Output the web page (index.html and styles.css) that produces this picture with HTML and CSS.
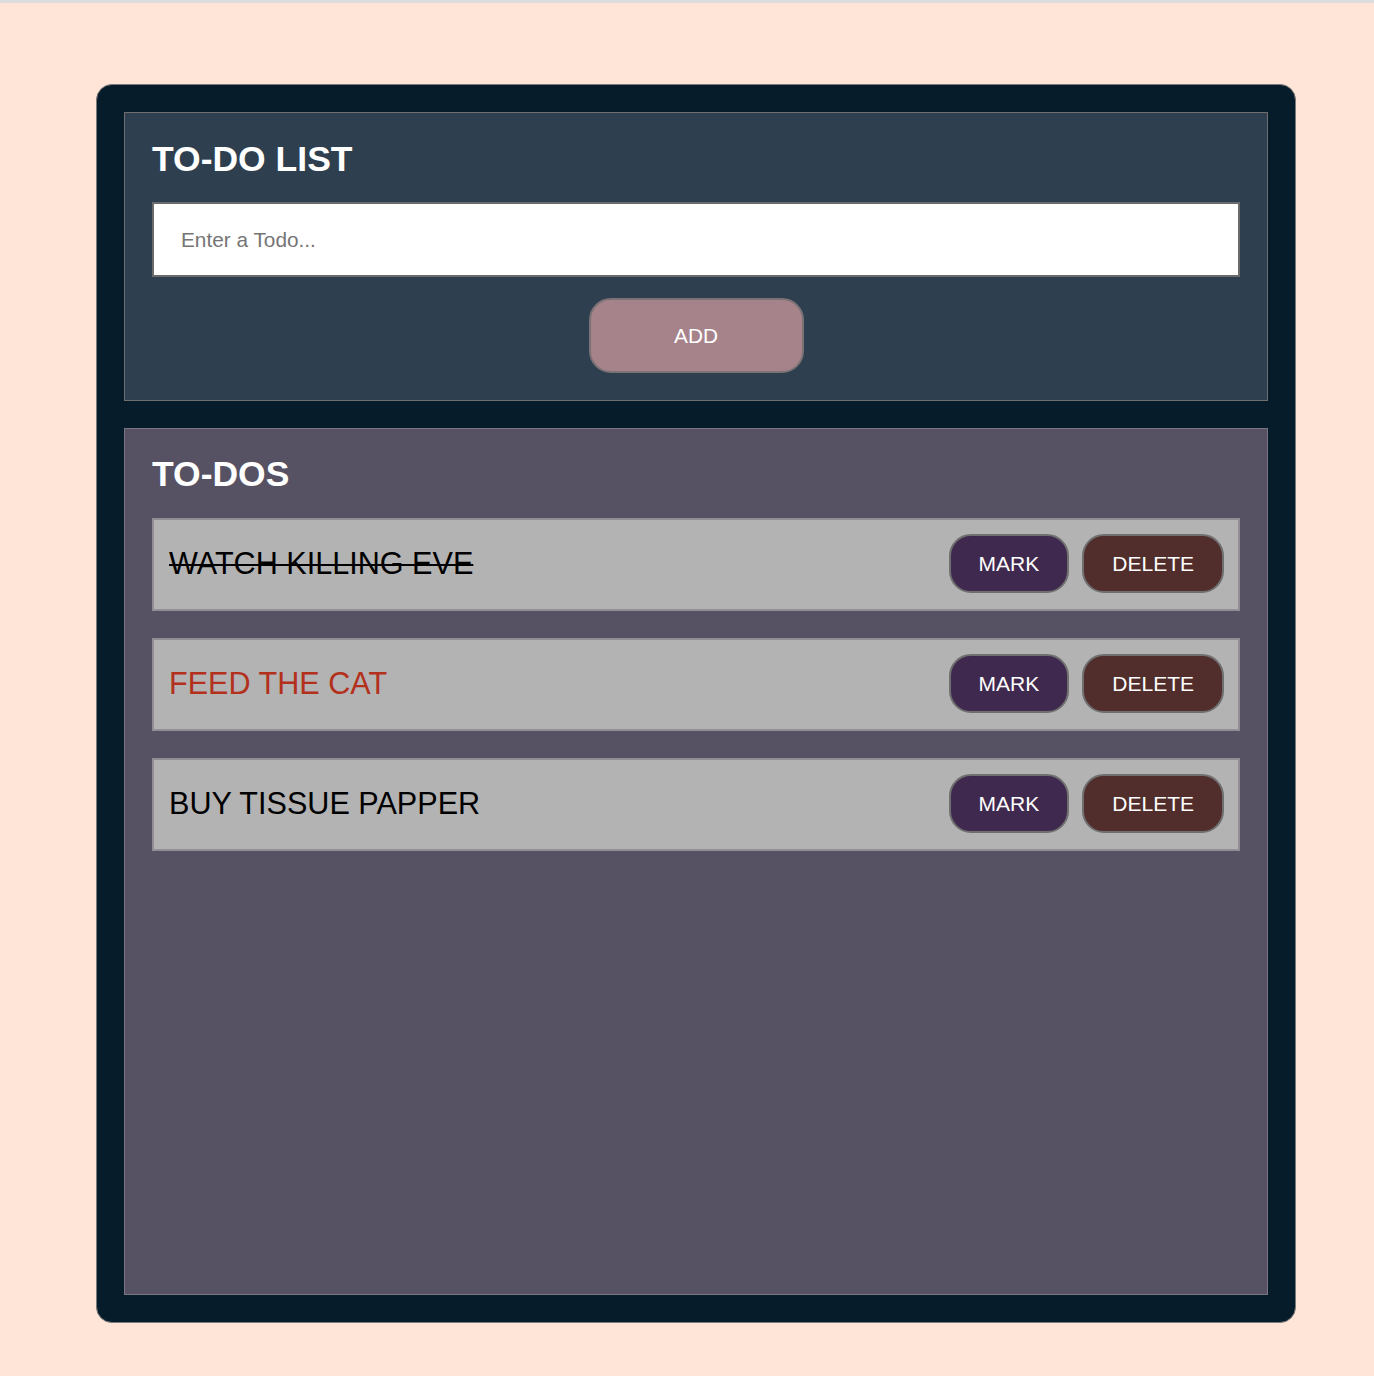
FILE: index.html
```html
<!DOCTYPE html>
<html lang="en">
<head>
<meta charset="utf-8">
<title>To-Do List</title>
<link rel="stylesheet" href="styles.css">
</head>
<body>
<main class="app">
  <section class="panel panel-add">
    <h1 class="title">TO-DO LIST</h1>
    <input class="todo-input" type="text" placeholder="Enter a Todo...">
    <button class="btn btn-add">ADD</button>
  </section>
  <section class="panel panel-list">
    <h2 class="title">TO-DOS</h2>
    <ul class="todos">
      <li class="todo">
        <span class="todo-text done">WATCH KILLING EVE</span>
        <div class="actions">
          <button class="btn btn-mark">MARK</button>
          <button class="btn btn-delete">DELETE</button>
        </div>
      </li>
      <li class="todo">
        <span class="todo-text urgent">FEED THE CAT</span>
        <div class="actions">
          <button class="btn btn-mark">MARK</button>
          <button class="btn btn-delete">DELETE</button>
        </div>
      </li>
      <li class="todo">
        <span class="todo-text">BUY TISSUE PAPPER</span>
        <div class="actions">
          <button class="btn btn-mark">MARK</button>
          <button class="btn btn-delete">DELETE</button>
        </div>
      </li>
    </ul>
  </section>
</main>
</body>
</html>
```
FILE: styles.css
```css
* {
  box-sizing: border-box;
}

html, body {
  margin: 0;
  padding: 0;
}

body {
  background: #ffe5d7;
  border-top: 3px solid #dcdcdf;
  font-family: "Liberation Sans", Arial, Helvetica, sans-serif;
  min-height: 1376px;
}

.app {
  width: 1200px;
  height: 1239px;
  margin: 81px 0 0 96px;
  background: #071c2a;
  border: 1px solid #7a7a7a;
  border-radius: 16px;
  padding: 27px;
  display: flex;
  flex-direction: column;
  gap: 27px;
}

.panel {
  border: 1px solid #6f6f6f;
  padding: 26px 27px 27px 27px;
  display: flex;
  flex-direction: column;
}

.panel-add {
  background: #2e3f4f;
  height: 289px;
}

.panel-list {
  background: #565264;
  flex: 1;
  border-color: #7a7580;
  padding-top: 25px;
}

.title {
  margin: 0;
  font-size: 35.5px;
  line-height: 41px;
  font-weight: 700;
  color: #ffffff;
}

.panel-add .title {
  margin-bottom: 22px;
}

.panel-list .title {
  margin-bottom: 23px;
}

.todo-input {
  height: 75px;
  width: 100%;
  border: 2px solid #6b6b6b;
  background: #ffffff;
  padding: 0 27px;
  font-family: inherit;
  font-size: 20.8px;
  color: #333;
  outline: none;
}

.todo-input::placeholder {
  color: #757575;
}

.btn {
  font-family: inherit;
  color: #ffffff;
  border: 2px solid #6f6f6f;
  border-radius: 22px;
  cursor: pointer;
}

.btn-add {
  align-self: center;
  margin-top: 21px;
  width: 215px;
  height: 75px;
  background: #a6838a;
  border-color: #7b7276;
  font-size: 20.8px;
}

.todos {
  list-style: none;
  margin: 0;
  padding: 0;
  display: flex;
  flex-direction: column;
  gap: 27px;
}

.todo {
  height: 93px;
  background: #b3b3b3;
  border: 2px solid #928d94;
  padding: 0 14px 2px 15px;
  display: flex;
  align-items: center;
  justify-content: space-between;
}

.todo-text {
  font-size: 30.6px;
  color: #000000;
}

.todo-text.done {
  text-decoration: line-through;
  text-decoration-thickness: 2px;
}

.todo-text.urgent {
  color: #b3301c;
}

.actions {
  display: flex;
  gap: 13px;
}

.actions .btn {
  height: 59px;
  padding: 0 28px;
  font-size: 21px;
  border-radius: 22px;
}

.btn-mark {
  background: #40294f;
}

.btn-delete {
  background: #512d2c;
}
```
